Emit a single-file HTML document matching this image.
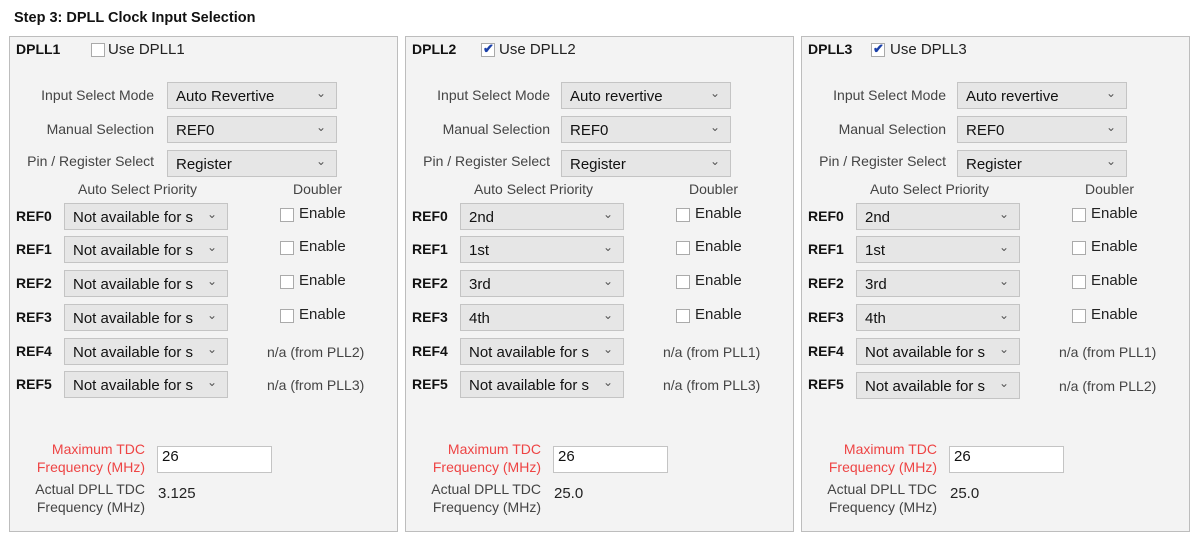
<!DOCTYPE html>
<html><head><meta charset="utf-8"><style>
body{margin:0;width:1200px;height:538px;background:#fff;font-family:"Liberation Sans",Arial,sans-serif;position:relative;overflow:hidden}
.t{position:absolute;left:14px;top:10px;font-weight:bold;font-size:14.5px;color:#111}
.p{position:absolute;top:36px;width:387px;height:494px;background:#f3f3f3;border:1px solid #bdbdbd}
.p *{position:absolute;white-space:nowrap}
.b{font-weight:bold;font-size:14px;color:#111}
.l{font-size:14px;color:#444;text-align:right;width:144px;left:0}
.s{height:27px;background:#e6e6e6;border:1px solid #c4c4c4;font-size:15px;color:#111;line-height:28px;padding-left:8px;box-sizing:border-box;overflow:hidden}
.s::after{content:"⌄";position:absolute;right:10px;top:-4px;font-size:12px;color:#555}
.cb{width:12px;height:12px;border:1px solid #aaa;background:#fff}
.e{font-size:15px;color:#222}
.h{font-size:14px;color:#444}
.r{font-size:14px;color:#ee4444;text-align:right;width:135px;left:0;line-height:18px}
.a{font-size:14px;color:#444;text-align:right;width:135px;left:0;line-height:18px}
.in{left:147px;top:409px;width:115px;height:27px;background:#fff;border:1px solid #c4c4c4;box-sizing:border-box;font-size:15px;padding:1px 4px;color:#111}
.v{left:148px;top:448px;font-size:15px;color:#222}
.ck{color:#1a3fa8;font-size:13px;font-weight:bold;left:1px;top:-3px}
</style></head><body>
<div class="t">Step 3: DPLL Clock Input Selection</div>

<div class="p" style="left:9px">
<div class="b" style="left:6px;top:4px">DPLL1</div>
<div class="cb" style="left:81px;top:6px"></div>
<div class="e" style="left:98px;top:4px">Use DPLL1</div>
<div class="l" style="top:50px">Input Select Mode</div><div class="s" style="left:157px;top:45px;width:170px">Auto Revertive</div>
<div class="l" style="top:84px">Manual Selection</div><div class="s" style="left:157px;top:79px;width:170px">REF0</div>
<div class="l" style="top:116px">Pin / Register Select</div><div class="s" style="left:157px;top:113px;width:170px">Register</div>
<div class="h" style="left:68px;top:144px">Auto Select Priority</div><div class="h" style="left:283px;top:144px">Doubler</div>
<div class="b" style="left:6px;top:171px">REF0</div><div class="s" style="left:54px;top:166px;width:164px">Not available for s</div><div class="cb" style="left:270px;top:171px"></div><div class="e" style="left:289px;top:168px">Enable</div>
<div class="b" style="left:6px;top:204px">REF1</div><div class="s" style="left:54px;top:199px;width:164px">Not available for s</div><div class="cb" style="left:270px;top:204px"></div><div class="e" style="left:289px;top:201px">Enable</div>
<div class="b" style="left:6px;top:238px">REF2</div><div class="s" style="left:54px;top:233px;width:164px">Not available for s</div><div class="cb" style="left:270px;top:238px"></div><div class="e" style="left:289px;top:235px">Enable</div>
<div class="b" style="left:6px;top:272px">REF3</div><div class="s" style="left:54px;top:267px;width:164px">Not available for s</div><div class="cb" style="left:270px;top:272px"></div><div class="e" style="left:289px;top:269px">Enable</div>
<div class="b" style="left:6px;top:306px">REF4</div><div class="s" style="left:54px;top:301px;width:164px">Not available for s</div><div class="h" style="left:257px;top:307px">n/a (from PLL2)</div>
<div class="b" style="left:6px;top:339px">REF5</div><div class="s" style="left:54px;top:334px;width:164px">Not available for s</div><div class="h" style="left:257px;top:340px">n/a (from PLL3)</div>
<div class="r" style="top:403px">Maximum TDC<br>Frequency (MHz)</div><div class="in">26</div>
<div class="a" style="top:443px">Actual DPLL TDC<br>Frequency (MHz)</div><div class="v">3.125</div>
</div>

<div class="p" style="left:405px">
<div class="b" style="left:6px;top:4px">DPLL2</div>
<div class="cb" style="left:75px;top:6px"><span class="ck">✔</span></div>
<div class="e" style="left:93px;top:4px">Use DPLL2</div>
<div class="l" style="top:50px">Input Select Mode</div><div class="s" style="left:155px;top:45px;width:170px">Auto revertive</div>
<div class="l" style="top:84px">Manual Selection</div><div class="s" style="left:155px;top:79px;width:170px">REF0</div>
<div class="l" style="top:116px">Pin / Register Select</div><div class="s" style="left:155px;top:113px;width:170px">Register</div>
<div class="h" style="left:68px;top:144px">Auto Select Priority</div><div class="h" style="left:283px;top:144px">Doubler</div>
<div class="b" style="left:6px;top:171px">REF0</div><div class="s" style="left:54px;top:166px;width:164px">2nd</div><div class="cb" style="left:270px;top:171px"></div><div class="e" style="left:289px;top:168px">Enable</div>
<div class="b" style="left:6px;top:204px">REF1</div><div class="s" style="left:54px;top:199px;width:164px">1st</div><div class="cb" style="left:270px;top:204px"></div><div class="e" style="left:289px;top:201px">Enable</div>
<div class="b" style="left:6px;top:238px">REF2</div><div class="s" style="left:54px;top:233px;width:164px">3rd</div><div class="cb" style="left:270px;top:238px"></div><div class="e" style="left:289px;top:235px">Enable</div>
<div class="b" style="left:6px;top:272px">REF3</div><div class="s" style="left:54px;top:267px;width:164px">4th</div><div class="cb" style="left:270px;top:272px"></div><div class="e" style="left:289px;top:269px">Enable</div>
<div class="b" style="left:6px;top:306px">REF4</div><div class="s" style="left:54px;top:301px;width:164px">Not available for s</div><div class="h" style="left:257px;top:307px">n/a (from PLL1)</div>
<div class="b" style="left:6px;top:339px">REF5</div><div class="s" style="left:54px;top:334px;width:164px">Not available for s</div><div class="h" style="left:257px;top:340px">n/a (from PLL3)</div>
<div class="r" style="top:403px">Maximum TDC<br>Frequency (MHz)</div><div class="in">26</div>
<div class="a" style="top:443px">Actual DPLL TDC<br>Frequency (MHz)</div><div class="v">25.0</div>
</div>

<div class="p" style="left:801px">
<div class="b" style="left:6px;top:4px">DPLL3</div>
<div class="cb" style="left:69px;top:6px"><span class="ck">✔</span></div>
<div class="e" style="left:88px;top:4px">Use DPLL3</div>
<div class="l" style="top:50px">Input Select Mode</div><div class="s" style="left:155px;top:45px;width:170px">Auto revertive</div>
<div class="l" style="top:84px">Manual Selection</div><div class="s" style="left:155px;top:79px;width:170px">REF0</div>
<div class="l" style="top:116px">Pin / Register Select</div><div class="s" style="left:155px;top:113px;width:170px">Register</div>
<div class="h" style="left:68px;top:144px">Auto Select Priority</div><div class="h" style="left:283px;top:144px">Doubler</div>
<div class="b" style="left:6px;top:171px">REF0</div><div class="s" style="left:54px;top:166px;width:164px">2nd</div><div class="cb" style="left:270px;top:171px"></div><div class="e" style="left:289px;top:168px">Enable</div>
<div class="b" style="left:6px;top:204px">REF1</div><div class="s" style="left:54px;top:199px;width:164px">1st</div><div class="cb" style="left:270px;top:204px"></div><div class="e" style="left:289px;top:201px">Enable</div>
<div class="b" style="left:6px;top:238px">REF2</div><div class="s" style="left:54px;top:233px;width:164px">3rd</div><div class="cb" style="left:270px;top:238px"></div><div class="e" style="left:289px;top:235px">Enable</div>
<div class="b" style="left:6px;top:272px">REF3</div><div class="s" style="left:54px;top:267px;width:164px">4th</div><div class="cb" style="left:270px;top:272px"></div><div class="e" style="left:289px;top:269px">Enable</div>
<div class="b" style="left:6px;top:306px">REF4</div><div class="s" style="left:54px;top:301px;width:164px">Not available for s</div><div class="h" style="left:257px;top:307px">n/a (from PLL1)</div>
<div class="b" style="left:6px;top:339px">REF5</div><div class="s" style="left:54px;top:335px;width:164px">Not available for s</div><div class="h" style="left:257px;top:341px">n/a (from PLL2)</div>
<div class="r" style="top:403px">Maximum TDC<br>Frequency (MHz)</div><div class="in">26</div>
<div class="a" style="top:443px">Actual DPLL TDC<br>Frequency (MHz)</div><div class="v">25.0</div>
</div>
</body></html>
